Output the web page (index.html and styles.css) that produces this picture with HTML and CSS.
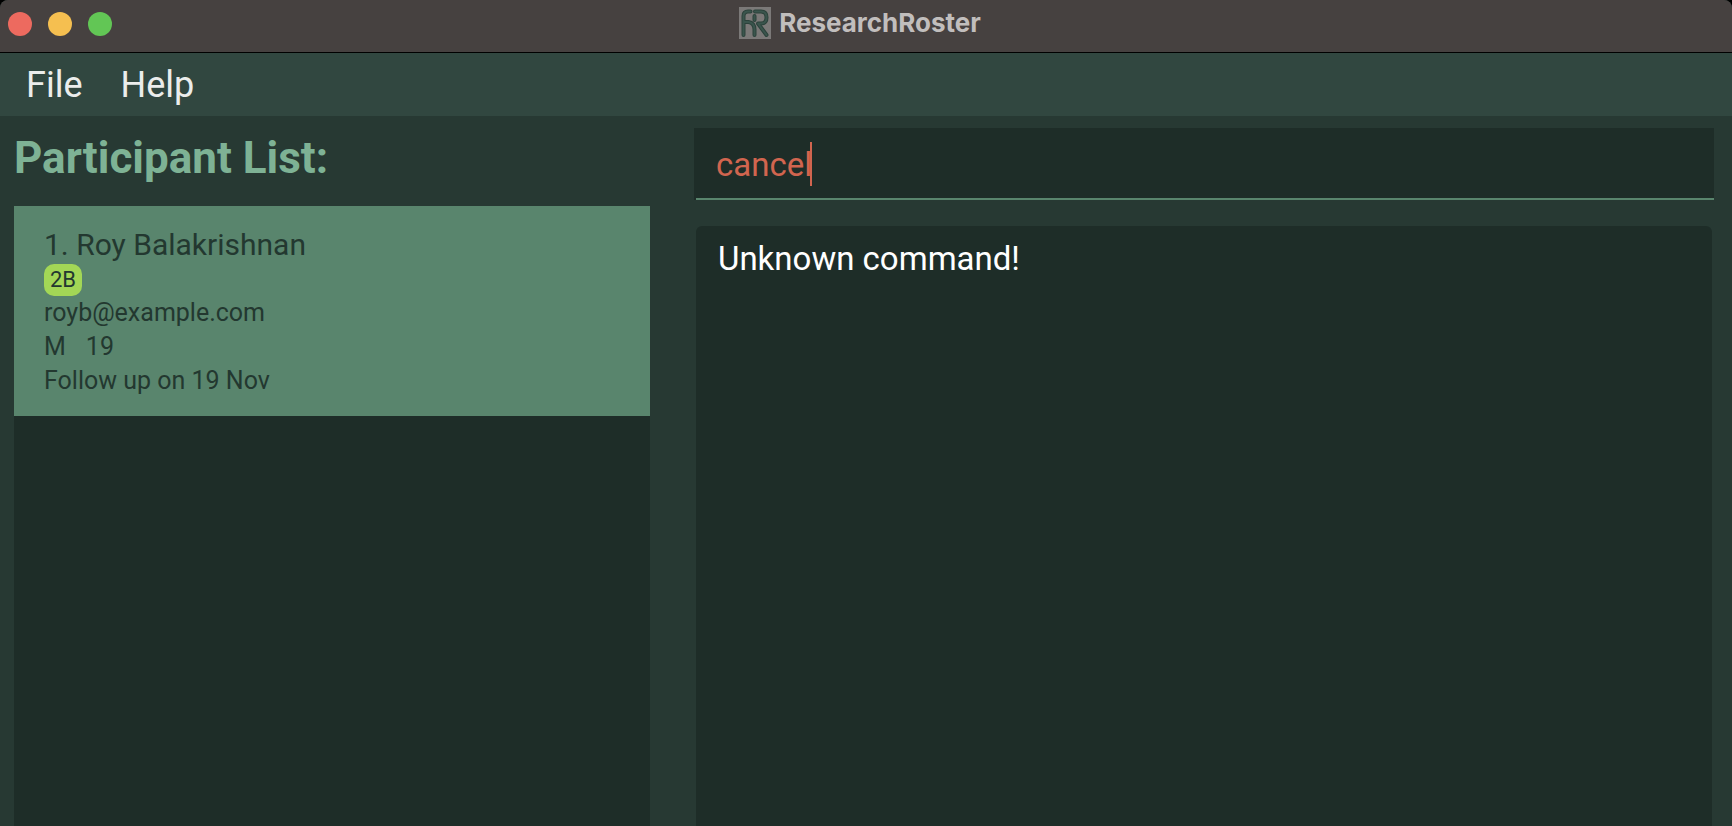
FILE: index.html
```html
<!DOCTYPE html>
<html lang="en">
<head>
<meta charset="utf-8">
<title>ResearchRoster</title>
<link rel="stylesheet" href="styles.css">
</head>
<body>
<header class="titlebar">
  <div class="lights">
    <button class="light close" aria-label="Close"></button>
    <button class="light minimise" aria-label="Minimise"></button>
    <button class="light expand" aria-label="Zoom"></button>
  </div>
  <h1 class="app-title">
    <svg class="logo" viewBox="0 0 32 32" aria-hidden="true">
      <rect width="32" height="32" fill="#7b7978"/>
      <g fill="none" stroke="#2c423b" stroke-width="4" stroke-linecap="round" stroke-linejoin="round">
        <path d="M4.500 28V9q0-4.500 4.500-4.500h2.500"/>
        <path d="M5 15h4.500q6 1 6 7.500v5.500"/>
        <path d="M15.500 13V9M16 4.500h6q5.500 0 5.500 6t-5.500 6h-3l8.500 11.500"/>
      </g>
      <g fill="none" stroke="#3a554d" stroke-width="2" stroke-linecap="round" stroke-linejoin="round">
        <path d="M4.500 28V9q0-4.500 4.500-4.500h2.500"/>
        <path d="M5 15h4.500q6 1 6 7.500v5.500"/>
        <path d="M15.500 13V9M16 4.500h6q5.500 0 5.500 6t-5.500 6h-3l8.500 11.500"/>
      </g>
    </svg>
    <span>ResearchRoster</span>
  </h1>
</header>
<nav class="menubar">
  <button class="menu">File</button>
  <button class="menu">Help</button>
</nav>
<main class="content">
  <section class="participants">
    <h2 class="heading">Participant List:</h2>
    <ul class="list">
      <li class="person">
        <span class="name">1. Roy Balakrishnan</span>
        <span class="tag">2B</span>
        <span class="detail">royb@example.com</span>
        <span class="detail pair"><span>M</span><span>19</span></span>
        <span class="detail">Follow up on 19 Nov</span>
      </li>
    </ul>
  </section>
  <section class="console">
    <div class="command">
      <input class="command-input" type="text" value="cancel" aria-label="Command" spellcheck="false">
      <span class="caret"></span>
    </div>
    <output class="result">Unknown command!</output>
  </section>
</main>
</body>
</html>
```

FILE: styles.css
```css
* {
  box-sizing: border-box;
}

html {
  background: #000;
}

body {
  margin: 0;
  min-height: 100vh;
  display: flex;
  flex-direction: column;
  background: #273933;
  border-radius: 8px 8px 0 0;
  overflow: hidden;
  font-family: Roboto, "Liberation Sans", sans-serif;
}

button {
  padding: 0;
  border: 0;
  background: none;
  font: inherit;
}

.titlebar {
  display: grid;
  grid-template-columns: 1fr auto 1fr;
  align-items: center;
  height: 53px;
  padding: 0 8px 7px;
  border-bottom: 1px solid #000;
  background: #464140;
}

.lights {
  display: flex;
  gap: 16px;
  padding-top: 3px;
}

.light {
  width: 24px;
  height: 24px;
  border-radius: 50%;
}

.close { background: #ed6a5f; }
.minimise { background: #f5bf50; }
.expand { background: #62c655; }

.app-title {
  display: flex;
  align-items: center;
  gap: 8px;
  margin: 0;
  padding-right: 12px;
  color: #c1bebd;
  font-family: Inter, sans-serif;
  font-size: 26px;
  line-height: 32px;
  font-weight: 700;
}

.logo {
  width: 32px;
  height: 32px;
}

.menubar {
  display: flex;
  gap: 38px;
  padding: 11px 26px 9px;
  background: #314740;
}

.menu {
  color: #ebedec;
  font-size: 36px;
  line-height: 43px;
}

.content {
  flex: 1;
  display: grid;
  grid-template-columns: 636fr 1020fr;
  gap: 44px;
  padding: 0 18px 0 14px;
}

.participants,
.console {
  display: flex;
  flex-direction: column;
  min-width: 0;
}

.heading {
  margin: 0;
  padding: 12px 0 18px;
  color: #7eb295;
  font-size: 44px;
  line-height: 60px;
  font-weight: 700;
}

.list {
  flex: 1;
  margin: 0;
  padding: 0;
  list-style: none;
  background: #1e2d28;
}

.person {
  display: flex;
  flex-direction: column;
  align-items: flex-start;
  padding: 20px 30px 18px;
  background: #59856d;
  color: #233830;
}

.name {
  font-size: 30px;
  line-height: 38px;
}

.tag {
  padding: 0 6px;
  border-radius: 10px;
  background: #a3d756;
  font-size: 22px;
  line-height: 32px;
}

.detail {
  font-size: 25px;
  line-height: 34px;
}

.pair {
  display: flex;
  gap: 20px;
}

.console {
  padding-top: 12px;
}

.command {
  position: relative;
  display: flex;
  height: 72px;
  margin-bottom: 26px;
  background: linear-gradient(#59856d, #59856d) 2px 100% / 100% 2px no-repeat #1e2d28;
}

.command-input {
  flex: 1;
  min-width: 0;
  padding: 0 22px;
  border: 0;
  outline: 0;
  background: none;
  color: #d1654f;
  font: inherit;
  font-size: 33px;
}

.caret {
  position: absolute;
  left: 116px;
  top: 14px;
  width: 2px;
  height: 44px;
  background: #d1654f;
}

.result {
  flex: 1;
  margin: 0 2px;
  padding: 12px 22px;
  border-radius: 6px 6px 0 0;
  background: #1e2d28;
  color: #fff;
  font-size: 33px;
  line-height: 41px;
}
```
